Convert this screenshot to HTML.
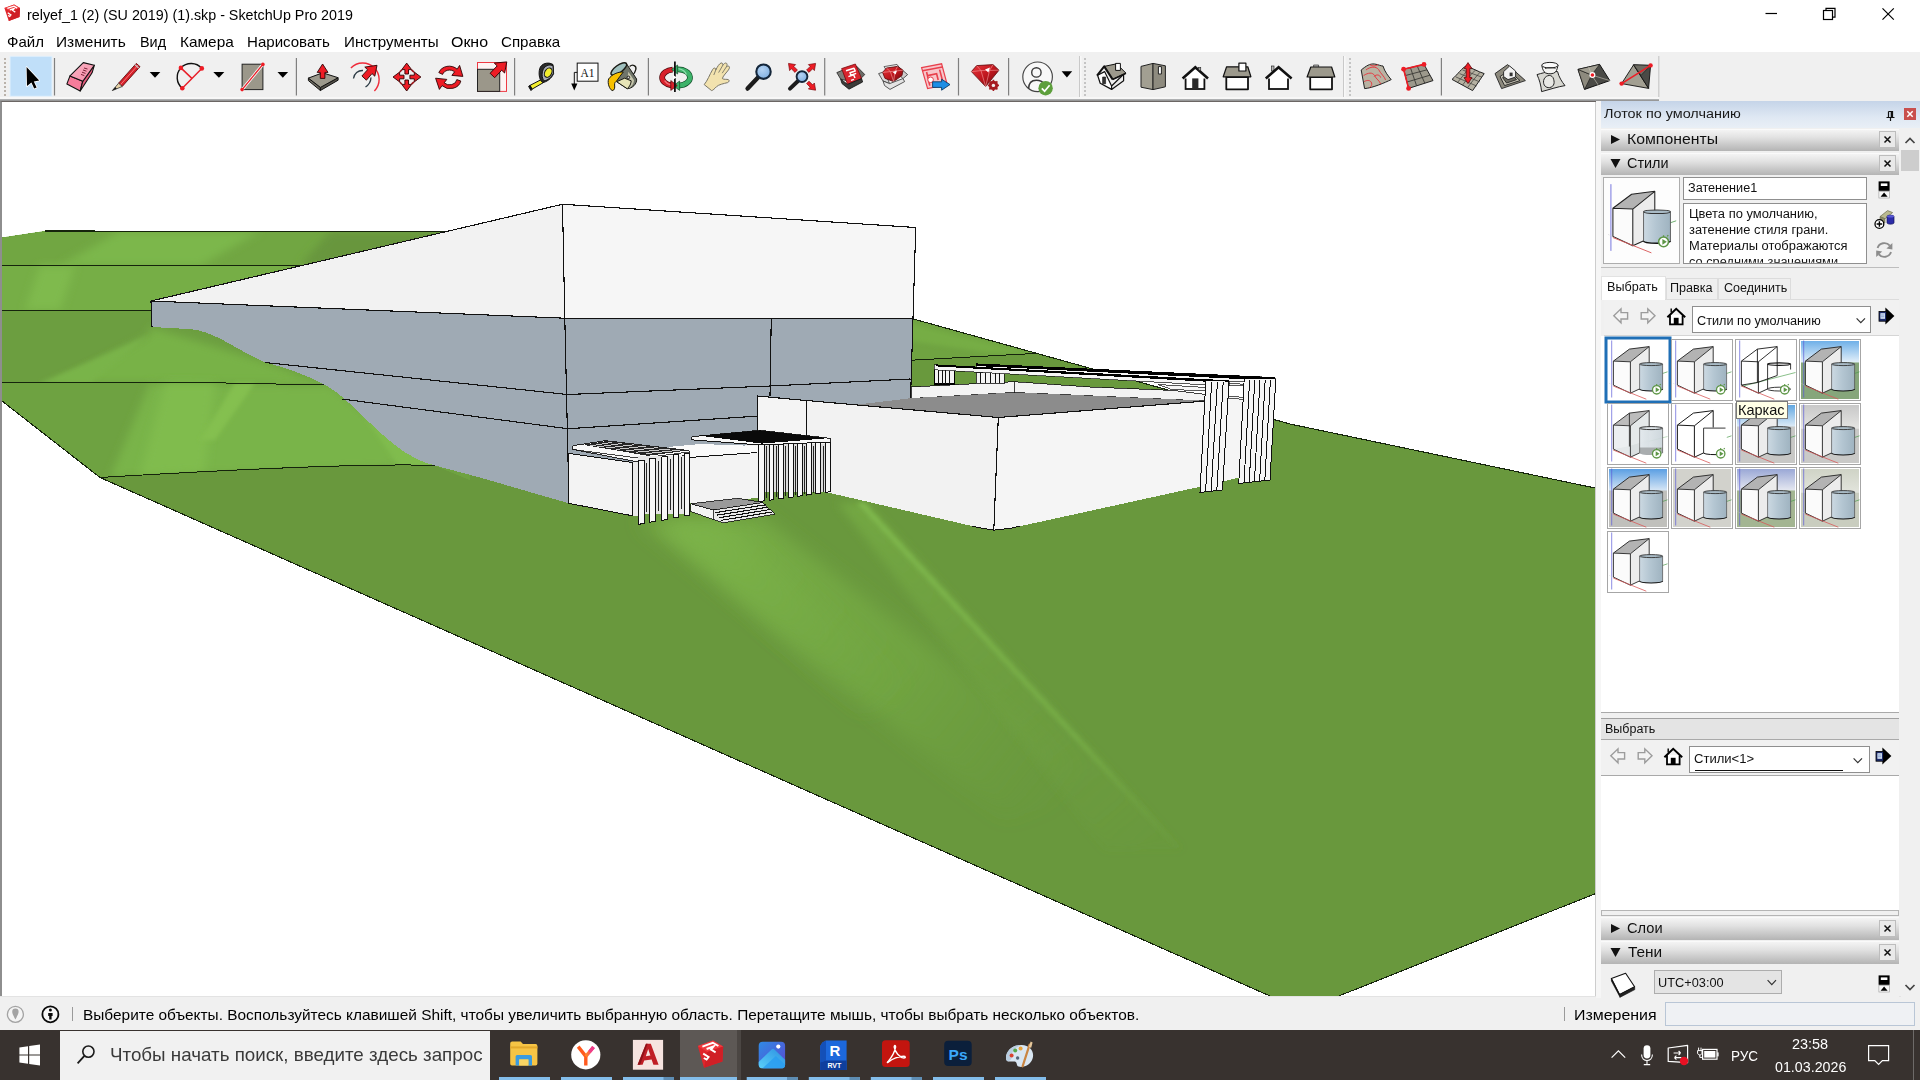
<!DOCTYPE html>
<html lang="ru">
<head>
<meta charset="utf-8">
<title>relyef_1 (2) (SU 2019) (1).skp - SketchUp Pro 2019</title>
<style>
html,body{margin:0;padding:0;}
body{width:1920px;height:1080px;overflow:hidden;position:relative;background:#fff;font-family:"Liberation Sans",sans-serif;}
.a{position:absolute;box-sizing:border-box;}
.t{position:absolute;white-space:nowrap;line-height:1;transform-origin:0 0;z-index:20;}
.bar{position:absolute;left:1601px;width:1298px;background:linear-gradient(#f4f4f4 0%,#e2e2e2 35%,#c9c9c9 70%,#b4b4b4 100%);border-top:1px solid #fafafa;box-sizing:border-box;}
.xb{position:absolute;left:1879px;width:17px;height:17px;background:#e9e9e9;border:1px solid #bdbdbd;box-sizing:border-box;}
svg{position:absolute;left:0;top:0;overflow:visible;}
</style>
</head>
<body>

<!-- title bar / menu -->
<div class="a" style="left:0;top:0;width:1920px;height:52px;background:#fff;"></div>
<!-- toolbar -->
<div class="a" style="left:0;top:52px;width:1920px;height:48px;background:#f0f0f0;"></div>
<div class="a" style="left:0;top:97px;width:1659px;height:2px;background:#f7f7f7;"></div>
<div class="a" style="left:0;top:99px;width:1659px;height:2px;background:linear-gradient(#b9bcbe,#8c8c8c);"></div>
<div class="a" style="left:1659px;top:97px;width:261px;height:4px;background:#f0f0f0;"></div>
<!-- region below toolbar right (panel gap) -->
<div class="a" style="left:1595px;top:101px;width:325px;height:897px;background:#f0f0f0;"></div>
<!-- viewport frame -->
<div class="a" style="left:0;top:101px;width:1596px;height:896px;background:#fff;border-left:2px solid #8e8e8e;border-top:1px solid #6b6664;"></div>
<div class="a" style="left:1595px;top:102px;width:1px;height:894px;background:#cdcdcd;"></div>
<div class="a" style="left:1596px;top:102px;width:5px;height:894px;background:#f6f6f6;z-index:1;"></div>
<!-- status bar -->
<div class="a" style="left:0;top:996px;width:1920px;height:34px;background:#f0f0f0;"></div>
<div class="a" style="left:0;top:996px;width:1920px;height:1px;background:#e3e3e3;"></div>
<div class="a" style="left:72px;top:1007px;width:1px;height:14px;background:#9a9a9a;"></div>
<div class="a" style="left:1564px;top:1007px;width:1px;height:14px;background:#9a9a9a;"></div>
<div class="a" style="left:1665px;top:1002px;width:250px;height:24px;background:#eff1f4;border:1px solid #b9c6d6;"></div>
<!-- taskbar -->
<div class="a" style="left:0;top:1030px;width:1920px;height:50px;background:#38322f;"></div>
<div class="a" style="left:60px;top:1031px;width:430px;height:49px;background:#f1f1f1;"></div>
<div class="a" style="left:680px;top:1030px;width:57px;height:50px;background:#5d5855;"></div>
<div class="a" style="left:737px;top:1030px;width:4px;height:50px;background:#4b4643;"></div>
<div class="a" style="left:1913px;top:1030px;width:1px;height:50px;background:#6d6a68;"></div>

<!-- 3D viewport scene -->
<svg width="1920" height="1080" viewBox="0 0 1920 1080" style="z-index:2">
<defs>
  <clipPath id="vp"><rect x="2" y="102" width="1593" height="894"/></clipPath>
  <filter id="b4" x="-20%" y="-20%" width="140%" height="140%"><feGaussianBlur stdDeviation="4"/></filter>
  <filter id="b8" x="-20%" y="-20%" width="140%" height="140%"><feGaussianBlur stdDeviation="9"/></filter>
  <filter id="b2" x="-20%" y="-20%" width="140%" height="140%"><feGaussianBlur stdDeviation="2"/></filter>
  <linearGradient id="gA" gradientUnits="userSpaceOnUse" x1="700" y1="520" x2="1060" y2="805"><stop offset="0" stop-color="#78ae46" stop-opacity="0.95"/><stop offset="0.55" stop-color="#74a943" stop-opacity="0.7"/><stop offset="1" stop-color="#6f9f40" stop-opacity="0"/></linearGradient>
  <linearGradient id="gA2" gradientUnits="userSpaceOnUse" x1="690" y1="520" x2="900" y2="705"><stop offset="0" stop-color="#7db54a" stop-opacity="0.8"/><stop offset="1" stop-color="#76ab45" stop-opacity="0"/></linearGradient>
  <linearGradient id="gB" gradientUnits="userSpaceOnUse" x1="850" y1="503" x2="1150" y2="849"><stop offset="0" stop-color="#74a943" stop-opacity="0.9"/><stop offset="1" stop-color="#6f9f40" stop-opacity="0.1"/></linearGradient>
  <linearGradient id="gC" gradientUnits="userSpaceOnUse" x1="860" y1="503" x2="1178" y2="848"><stop offset="0" stop-color="#80b94d" stop-opacity="1"/><stop offset="0.7" stop-color="#7ab248" stop-opacity="0.7"/><stop offset="1" stop-color="#74a943" stop-opacity="0.1"/></linearGradient>
  <clipPath id="terr"><path d="M2,237.5 L45,231 L470,231 L912.5,318.75 L1290,424 L1595,488 L1595,893.75 L1338.75,996 L1270,996 L100,477.5 L2,401 Z"/></clipPath>
  <clipPath id="hillL"><path d="M2,237.5 L45,231 L470,231 L470,480 L435,465.5 C380,463 250,467 100,477.5 L2,401 Z"/></clipPath>
</defs>
<g clip-path="url(#vp)" shape-rendering="crispEdges">
  <!-- terrain base -->
  <path d="M2,237.5 L45,231 L470,231 L912.5,318.75 L1290,424 L1595,488 L1595,893.75 L1338.75,996 L1270,996 L100,477.5 L2,401 Z" fill="#69983d"/>
  <!-- left hill lighter -->
  <g clip-path="url(#hillL)">
    <rect x="0" y="225" width="480" height="260" fill="#71a642"/>
    <!-- band 1 -->
    <polygon points="120,231 260,231 200,266 60,266" fill="#7cb74b" filter="url(#b4)"/>
    <polygon points="330,231 470,231 470,266 300,266" fill="#67963c" filter="url(#b4)"/>
    <!-- band 2 -->
    <rect x="0" y="265.5" width="330" height="45" fill="#76ae46"/>
    <polygon points="40,266 75,266 60,310 25,310" fill="#7fba4d" filter="url(#b4)"/>
    <!-- band 3 -->
    <rect x="0" y="310" width="340" height="73" fill="#6c9e40"/>
    <polygon points="150,327 265,362 330,385 120,383 60,383 150,335" fill="#78b247" filter="url(#b4)"/>
    <polygon points="150,335 40,383 90,383" fill="#79b449" filter="url(#b2)"/>
    <!-- band 4 -->
    <rect x="0" y="382.5" width="470" height="100" fill="#6ea241"/>
    <polygon points="150,383 330,385 375,420 435,465 330,470 110,478" fill="#79b448" filter="url(#b4)"/>
    <polygon points="165,383 215,383 205,472 140,476" fill="#80bc4e" filter="url(#b4)"/>
    <polygon points="235,383 255,383 215,440 200,440" fill="#84c050" filter="url(#b2)"/>
    <polygon points="360,410 440,468 400,468" fill="#80bc4d" filter="url(#b2)"/>
  </g>
  <!-- fold lines left hill -->
  <g stroke="#15240c" stroke-width="1" fill="none">
    <path d="M45,231 L447,231.5"/>
    <path d="M2,265.3 L300,265.5"/>
    <path d="M2,310 L151,310.3"/>
    <path d="M2,382.5 L200,382.5 L327,385"/>
    <path d="M100,477.5 C250,468.5 380,463.5 435,465.5"/>
  </g>
  <!-- hill behind on the right -->
  <g clip-path="url(#terr)">
    <polygon points="905,310 1040,353 905,361" fill="#6fa341"/>
    <polygon points="905,322 1030,353 990,353 905,340" fill="#76ad45" filter="url(#b2)"/>
    <polygon points="905,361 1040,353.3 1290,424 1290,440 905,440" fill="#69993d"/>
    <!-- light streaks lower terrain -->
    <polygon points="640,520 762,518 1115,792 1005,818" fill="url(#gA)" filter="url(#b8)"/>
    <polygon points="662,522 722,520 930,700 860,715" fill="url(#gA2)" filter="url(#b8)"/>
    <polygon points="838,503 866,503 1182,849 1105,849" fill="url(#gB)" filter="url(#b4)"/>
    <polygon points="857,503 864.5,503 1181,848 1175,848" fill="url(#gC)" filter="url(#b2)"/>
  </g>
  <path d="M912,360.2 L1037.5,353.3" stroke="#15240c" stroke-width="1" fill="none"/>
  <!-- terrain outline -->
  <path d="M447,231.5 L45,231 M2,401 L100,477.5 L1270,996 M1338.75,996 L1595,893.75 M912.5,318.75 L1290,424 L1595,488" fill="none" stroke="#15240c" stroke-width="1.1"/>

  <!-- BIG BUILDING -->
  <!-- gray left face -->
  <path d="M151,301 L564.8,318.2 L569,503.3 L540,495 L480,477.5 L434.4,465.4 C428,463.6 422,461.6 417.3,459.3 C408,454.6 400,449.4 392.7,443.4 C384,436.2 376,428.8 368.2,421.3 C360,413.4 352,405.4 343.6,398 C338,393.2 332.4,389 326.4,385.7 C306,374.4 286,368 265.1,362.4 C240,352 215,331.4 191.4,329.2 L152,327 Z" fill="#9faab4"/>
  <!-- gray front face -->
  <polygon points="564.5,317.5 912.5,318 910.5,415 830,470 568.7,503.3" fill="#9faab4"/>
  <!-- white upper faces -->
  <polygon points="151,301 562.5,204.25 564.8,318.6" fill="#f2f2f2"/>
  <polygon points="562.5,204.25 915.75,227.5 912.5,318.8 564.8,318.6" fill="#f6f6f6"/>
  <g stroke="#111" stroke-width="1.1" fill="none" stroke-linejoin="round">
    <path d="M151,301 L562.5,204.25 L915.75,227.5 L910.5,400"/>
    <path d="M562.5,204.25 L564.8,318.2 L569,503.3"/>
    <path d="M151,301 L564.8,318.2 L912.5,318.4"/>
    <path d="M151,301 L152,327"/>
    <path d="M265,362.5 L567.5,394.5 L770,386 L910.5,379"/>
    <path d="M342,399 L568,428.75 L758.75,416"/>
    <path d="M771.25,318.2 L770,396"/>
  </g>

  <!-- FAR PERGOLA (behind lower building) -->
  <g>
    <!-- back parapet walls -->
    <polygon points="911,387 1014,381.7 1014,392.5 911,398.5" fill="#f4f4f4" stroke="#111" stroke-width="0.8"/>
    <polygon points="1014,381.7 1090,387 1173,390.4 1205.6,394.4 1205.6,401 1014,392.5" fill="#f3f3f3" stroke="#111" stroke-width="0.8"/>
    <!-- far left post clusters -->
    <rect x="934.4" y="366" width="20" height="18" fill="#f4f4f4" stroke="#000" stroke-width="1.3"/>
    <path d="M938,369 V384 M942,369 V384 M945.5,369 V384 M949.5,369 V384" stroke="#111" stroke-width="1"/>
    <rect x="976" y="372" width="28" height="11.5" fill="#f4f4f4" stroke="#111" stroke-width="0.8"/>
    <path d="M980,373 V383 M985,373 V383 M990,373 V383 M995,373 V383 M999.5,373 V383" stroke="#111" stroke-width="1"/>
    <!-- back beam -->
    <polygon points="976,364 1275.4,377.6 1275.4,382.4 1229,381.8 976,368.2" fill="#f6f6f6" stroke="#111" stroke-width="0.7"/>
    <polygon points="976,363.4 1275.4,377.2 1275.4,380.8 976,366" fill="#000"/>
    <!-- front beam -->
    <polygon points="934.4,364.8 1229,381.4 1229,386.2 934.4,369.8" fill="#f6f6f6" stroke="#111" stroke-width="0.7"/>
    <polygon points="936,364.4 1229,380.4 1229,383 936,366.4" fill="#000"/>
    <!-- inner beam -->
    <polygon points="1157.7,384.5 1207,387.6 1207,390.8 1172,389.6" fill="#f6f6f6" stroke="#111" stroke-width="0.7"/>
  </g>

  <!-- LOWER BUILDING -->
  <polygon points="757.5,396 806.7,400.6 806.7,470 757.5,470" fill="#f4f4f4"/>
  <path d="M757.5,437 L757.5,396 L806.7,400.6" stroke="#111" stroke-width="1.1" fill="none"/>
  <polygon points="858,404.5 911,398.2 1014,392.5 1206,400.8 998.3,417.5" fill="#8c8c8c"/>
  <polygon points="806.7,400.5 998.3,417.5 993.8,530.2 978.4,527.5 830,493 806.7,488" fill="#f2f2f2"/>
  <polygon points="998.3,417.5 1206,401 1244,398.4 1239.4,477.6 1200.3,486.7 1012,528 993.8,530.2" fill="#f5f5f5"/>
  <g stroke="#111" stroke-width="1.1" fill="none" stroke-linejoin="round">
    <path d="M806.7,400.5 L998.3,417.5 L1206,401"/>
    <path d="M998.3,417.5 L993.8,530.2"/>
    <path d="M806.7,400.5 L806.7,438"/>
    <path d="M972,526 L978.4,527.5 L993.8,530.2 L1012,528 L1020,526.2" stroke-width="1"/>
  </g>
  <!-- right post groups -->
  <polygon points="1229,383.6 1245.7,384.2 1245.7,386 1229,385.4" fill="#f6f6f6" stroke="#111" stroke-width="0.7"/>
  <polygon points="1228,396 1245,397.6 1245,399.6 1228,398" fill="#f6f6f6" stroke="#111" stroke-width="0.7"/>
  <polygon points="1205.8,381 1229,381.6 1222.5,490 1200,492.5" fill="#f6f6f6"/>
  <g stroke="#111" stroke-width="1" fill="none">
    <path d="M1205.8,381 L1200,492.5 L1222.5,490 L1229,382"/>
    <path d="M1211.6,382 L1205.6,492 M1217.4,382 L1211.2,491.4 M1223.2,382 L1216.8,490.8"/>
  </g>
  <polygon points="1244.2,378.6 1275.8,378.6 1270,480 1238.75,483.5" fill="#f6f6f6"/>
  <g stroke="#111" stroke-width="1" fill="none">
    <path d="M1244.2,379 L1238.75,483.5 L1270,480 L1275.8,379"/>
    <path d="M1249.6,380 L1244,483 M1254.8,380 L1249.2,482.4 M1260,380 L1254.4,481.8 M1265.2,380 L1259.6,481.2 M1270.4,380 L1264.8,480.6"/>
  </g>

  <!-- LEFT ENTRY BOX + PERGOLA 1 -->
  <polygon points="689,450 757.5,444.5 757.5,498 690,503.5" fill="#f3f3f3"/>
  <polygon points="668,447 700,444 757.5,446 757.5,452.5 689,457.5" fill="#fafafa"/>
  <path d="M689,457.5 L757.5,452.5" stroke="#111" stroke-width="1"/>
  <polygon points="568.3,453.3 632.5,462.5 632.5,515.8 568.7,503.3" fill="#f3f3f3" stroke="#111" stroke-width="1"/>
  <polygon points="632.5,462.5 638.3,462 638.3,516.5 632.5,515.8" fill="#ececec"/>
  <!-- pergola 1 slab -->
  <polygon points="572.5,445.6 605,440.6 689,450.6 689,455 640,462.5 572.5,449.6" fill="#f8f8f8" stroke="#111" stroke-width="0.9"/>
  <polygon points="583,444.8 607,441 687,450.6 648,455.8" fill="#262626"/>
  <path d="M590,446 L612,442.4 M597,447 L622,443.4 M606,448 L634,444.8 M616,449.4 L646,446.2 M626,450.8 L658,447.6 M636,452.2 L670,449 M646,453.6 L680,450.2" stroke="#f4f4f4" stroke-width="0.8"/>
  <path d="M572.5,449.6 L640,458.4 L689,452" stroke="#111" stroke-width="0.8" fill="none"/>
  <!-- pergola 1 posts -->
  <rect x="638" y="456" width="51" height="58" fill="#e6e6e6"/>
  <g fill="#f7f7f7" stroke="#111" stroke-width="1">
    <polygon points="684.2,453 689.2,453 689.2,515.3 684.2,515.8"/>
    <polygon points="673.3,455 678.6,454.6 678.6,517.5 673.3,518"/>
    <polygon points="661.7,457 667.5,456.4 667.5,519.7 661.7,520.2"/>
    <polygon points="649.2,459 655,458.4 655,521.7 649.2,522.2"/>
    <polygon points="638.3,461 644.2,460.4 644.2,523.7 638.3,524.2"/>
  </g>
  <path d="M646.5,463 V512 M658,461 V511 M670,459 V510 M681,457 V509" stroke="#111" stroke-width="0.9"/>

  <!-- PERGOLA 2 -->
  <rect x="758" y="444" width="72" height="48" fill="#dcdcdc"/>
  <g fill="#f7f7f7" stroke="#111" stroke-width="1">
    <polygon points="825,442 830,442 830,491.7 825,492.4"/>
    <polygon points="815.8,442 820.8,442 820.8,493 815.8,493.6"/>
    <polygon points="806.7,442 811.7,442 811.7,494.3 806.7,495"/>
    <polygon points="797.5,442 802.5,442 802.5,495.6 797.5,496.3"/>
    <polygon points="788.3,442 793.3,442 793.3,497 788.3,497.7"/>
    <polygon points="778.3,442 783.3,442 783.3,498.3 778.3,499"/>
    <polygon points="769.2,442 773.8,442 773.8,499.6 769.2,500.2"/>
    <polygon points="758.3,442 764.2,442 764.2,500.9 758.3,501.6"/>
  </g>
  <path d="M766.5,446 V498 M776,446 V497 M785.8,446 V496 M795.4,446 V495 M804.6,446 V494 M813.7,446 V493 M823,446 V492" stroke="#111" stroke-width="0.9"/>
  <polygon points="691.7,436.7 760,430.3 830,438.3 830,442 760,445 691.7,439.8" fill="#f8f8f8" stroke="#111" stroke-width="0.9"/>
  <polygon points="699,435.6 760,430.4 828,438.2 762,443.6" fill="#0a0a0a"/>
  <path d="M691.7,439.8 L760,445 L830,442" stroke="#111" stroke-width="0.8" fill="none"/>

  <!-- STAIRS -->
  <polygon points="690.8,503.7 713.3,510 713.3,519.5 690.8,511.5" fill="#f3f3f3" stroke="#111" stroke-width="0.8"/>
  <polygon points="690.8,503.7 738.3,498.3 763.3,502.5 713.3,510" fill="#9a9a9a" stroke="#111" stroke-width="0.8"/>
  <polygon points="713.3,510 763.3,502.5 775,514.2 723.3,522.8 713.3,519.5" fill="#e9e9e9" stroke="#111" stroke-width="0.8"/>
  <path d="M715.3,512.6 L765.6,504.8 M717.3,515.1 L768,507.2 M719.3,517.7 L770.3,509.5 M721.3,520.3 L772.6,511.9" stroke="#111" stroke-width="1.1"/>
</g>
</svg>

<!-- DEFAULT TRAY PANEL -->
<div class="a" style="left:1601px;top:101px;width:319px;height:27px;background:linear-gradient(#c5d4e8,#dfe8f3 60%,#e9eff6);"></div>
<div class="a" style="left:1596px;top:101px;width:5px;height:897px;background:#f5f5f5;"></div>
<!-- pin + red close -->
<svg width="1920" height="1080" style="z-index:5">
  <g stroke="#111" stroke-width="1.2" fill="none"><path d="M1888.5,111.5 V117 M1888.5,111.5 H1892.5 V117 M1886.5,117.5 H1894.5 M1890.5,117.5 V121"/><path d="M1891.5,111.5 V117" stroke-width="1.6"/></g>
  <rect x="1904" y="108" width="12" height="12" fill="#c9504d"/>
  <path d="M1907.3,111.3 L1912.7,116.7 M1912.7,111.3 L1907.3,116.7" stroke="#fff" stroke-width="1.5"/>
</svg>
<!-- section bars -->
<div class="bar" style="top:128.5px;height:22.5px;width:298px;"></div>
<div class="bar" style="top:152.5px;height:22px;width:298px;"></div>
<div class="bar" style="top:917px;height:22.5px;width:298px;"></div>
<div class="bar" style="top:941px;height:22.5px;width:298px;"></div>
<div class="xb" style="top:131px;"></div><div class="xb" style="top:155px;"></div>
<div class="xb" style="top:920px;"></div><div class="xb" style="top:944px;"></div>
<svg width="1920" height="1080" style="z-index:6">
  <g stroke="#111" stroke-width="1.5">
    <path d="M1884.5,136.5 l6,6 m0,-6 l-6,6"/><path d="M1884.5,160.5 l6,6 m0,-6 l-6,6"/>
    <path d="M1884.5,925.5 l6,6 m0,-6 l-6,6"/><path d="M1884.5,949.5 l6,6 m0,-6 l-6,6"/>
  </g>
  <g fill="#111">
    <polygon points="1611,135 1620,139.5 1611,144"/>
    <polygon points="1610.5,159 1620.5,159 1615.5,168"/>
    <polygon points="1611,924 1620,928.5 1611,933"/>
    <polygon points="1610.5,948 1620.5,948 1615.5,957"/>
  </g>
  <!-- scrollbar -->
  <rect x="1901" y="128" width="19" height="870" fill="#f0f0f0"/>
  <rect x="1901" y="150" width="18" height="21" fill="#cdcdcd"/>
  <path d="M1905.5,143 L1910,138.5 L1914.5,143" stroke="#444" stroke-width="1.7" fill="none"/>
  <path d="M1905.5,985 L1910,989.5 L1914.5,985" stroke="#444" stroke-width="1.7" fill="none"/>
</svg>
<!-- styles section body -->
<div class="a" style="left:1601px;top:174.5px;width:298px;height:93px;background:#f0f0f0;"></div>
<div class="a" style="left:1603.4px;top:177.3px;width:76.6px;height:86.5px;background:#fdfdfd;border:1px solid #adadad;"></div>
<div class="a" style="left:1683.3px;top:177.3px;width:183.5px;height:23px;background:#fff;border:1px solid #8f8f8f;"></div>
<div class="a" style="left:1683.3px;top:203.4px;width:183.5px;height:60.4px;background:#fff;border:1px solid #8f8f8f;overflow:hidden;"></div>
<div class="a" style="left:1601px;top:267px;width:298px;height:1px;background:#bdbdbd;"></div>
<!-- tabs -->
<div class="a" style="left:1601px;top:268px;width:298px;height:31px;background:#f0f0f0;"></div>
<div class="a" style="left:1665.6px;top:278px;width:52px;height:20.5px;background:#efefef;border:1px solid #dcdcdc;border-bottom:none;"></div>
<div class="a" style="left:1718px;top:278px;width:73px;height:20.5px;background:#efefef;border:1px solid #dcdcdc;border-bottom:none;"></div>
<div class="a" style="left:1601px;top:276px;width:64.5px;height:23.5px;background:#fff;border:1px solid #e2e2e2;border-bottom:none;"></div>
<div class="a" style="left:1665px;top:298.5px;width:234px;height:1px;background:#dcdcdc;"></div>
<!-- nav row -->
<div class="a" style="left:1603.8px;top:300px;width:295px;height:35.5px;background:#f1f1f1;border-bottom:1px solid #d5d5d5;"></div>
<div class="a" style="left:1692.3px;top:306.3px;width:178.3px;height:27px;background:#fff;border:1px solid #8f8f8f;"></div>
<!-- thumbs area -->
<div class="a" style="left:1601px;top:336px;width:298px;height:375.5px;background:#fff;"></div>
<!-- splitter -->
<div class="a" style="left:1601px;top:711.5px;width:298px;height:7px;background:#f0f0f0;border-top:1.5px solid #a9a9a9;border-bottom:1px solid #a0a0a0;"></div>
<div class="a" style="left:1601px;top:718.5px;width:298px;height:21px;background:#e4e4e4;border-bottom:1px solid #a9a9a9;"></div>
<div class="a" style="left:1601px;top:740px;width:298px;height:35.5px;background:#f1f1f1;border-bottom:1px solid #a9a9a9;"></div>
<div class="a" style="left:1689.3px;top:746.4px;width:180.5px;height:27px;background:#fff;border:1px solid #8f8f8f;"></div>
<div class="a" style="left:1695.2px;top:769.6px;width:147.5px;height:1.2px;background:#111;"></div>
<div class="a" style="left:1601px;top:775.5px;width:298px;height:134.5px;background:#fff;"></div>
<div class="a" style="left:1601px;top:910px;width:298px;height:6px;background:#f0f0f0;border:1px solid #b5b5b5;"></div>
<!-- shadows row -->
<div class="a" style="left:1601px;top:963.5px;width:298px;height:34.5px;background:#f0f0f0;"></div>
<div class="a" style="left:1654px;top:970.3px;width:127.8px;height:23.4px;background:#e4e4e4;border:1px solid #adadad;"></div>
<!-- tooltip -->
<div class="a" style="left:1736px;top:401.3px;width:52px;height:18.2px;background:#ffffe6;border:1px solid #7a7a7a;z-index:25;"></div>

<!-- panel + titlebar icons -->
<svg width="1920" height="1080" style="z-index:9">
<defs>
  <g id="navset">
    <path d="M1613.8,315.8 L1621,308.8 L1621,312.6 L1627.6,312.6 L1627.6,319 L1621,319 L1621,322.8 Z" fill="#f4f4f4" stroke="#9c9c9c" stroke-width="1.4" stroke-linejoin="miter"/>
    <path d="M1655,315.8 L1647.8,308.8 L1647.8,312.6 L1641.2,312.6 L1641.2,319 L1647.8,319 L1647.8,322.8 Z" fill="#f4f4f4" stroke="#9c9c9c" stroke-width="1.4" stroke-linejoin="miter"/>
    <path d="M1667.4,317.2 L1676.2,308.8 L1685.2,317.2" fill="none" stroke="#000" stroke-width="2"/>
    <path d="M1670,315 V324.4 H1682.6 V315" fill="#fff" stroke="#000" stroke-width="1.8"/>
    <rect x="1673.8" y="317.8" width="4.8" height="6.6" fill="#000"/>
    <path d="M1671.2,312.6 V308.6" stroke="#000" stroke-width="1.4"/>
    <path d="M1856.6,318.4 L1860.8,322.6 L1865,318.4" fill="none" stroke="#333" stroke-width="1.2"/>
    <path d="M1885.4,307.6 L1894.4,316 L1885.4,324.4 Z" fill="#000"/>
    <rect x="1879" y="311.4" width="7.4" height="9.8" fill="#1b2b6b" stroke="#000" stroke-width="0.8"/>
    <rect x="1880.4" y="313.2" width="4.6" height="5.6" fill="#dbe6f5"/>
    <path d="M1881,315 H1884.4 M1881,316.8 H1884.4" stroke="#5b7fc0" stroke-width="0.7"/>
  </g>
</defs>
<use href="#navset"/>
<use href="#navset" transform="translate(-3,440)"/>
<!-- secondary pane toggle -->
<g id="sec">
  <rect x="1878.6" y="181.4" width="11" height="9.4" fill="#000"/>
  <rect x="1880.8" y="183.4" width="6.6" height="2.6" fill="#fff"/>
  <rect x="1878.9" y="191.6" width="10.4" height="6.4" fill="#f8f8f8" stroke="#9a9a9a" stroke-width="0.6"/>
  <polygon points="1880.6,196.8 1887.6,196.8 1884.1,192.6" fill="#000"/>
</g>
<use href="#sec" transform="translate(0,794)"/>
<!-- create new style -->
<polygon points="1880,216.6 1887.6,210.6 1892.6,212.6 1885,218.8" fill="#b9b98f" stroke="#6b6b52" stroke-width="0.7"/>
<polygon points="1880,216.6 1885,218.8 1885,223 1880,220.6" fill="#8d8d6a" stroke="#6b6b52" stroke-width="0.6"/>
<path d="M1887,216.4 C1887,214.8 1894,214.8 1894,216.4 V222.8 C1894,224.6 1887,224.6 1887,222.8 Z" fill="#2c2ca8" stroke="#15155a" stroke-width="0.7"/>
<ellipse cx="1890.5" cy="216.4" rx="3.5" ry="1.1" fill="#5a5ad6"/>
<circle cx="1879.4" cy="224" r="4.4" fill="#fff" stroke="#000" stroke-width="1.3"/>
<path d="M1876.6,224 H1882.2 M1879.4,221.2 V226.8" stroke="#000" stroke-width="1.4"/>
<!-- refresh -->
<g fill="none" stroke="#8c8c8c" stroke-width="1.9">
  <path d="M1877.6,248 A7,6.6 0 0 1 1889.8,245.6"/>
  <path d="M1891,252 A7,6.6 0 0 1 1878.8,254.4"/>
</g>
<polygon points="1892.4,243 1892.4,249.4 1886.4,248.4" fill="#8c8c8c"/>
<polygon points="1876.2,257 1876.2,250.6 1882.2,251.6" fill="#8c8c8c"/>
<!-- shadows cube -->
<g stroke="#111" stroke-linejoin="round">
  <polygon points="1611.4,978.6 1625.6,973.2 1634.6,986.8 1619.6,994.6" fill="#fff" stroke-width="1.1"/>
  <polygon points="1611.4,978.6 1619.6,994.6 1619.6,996.4 1611.4,981" fill="#111" stroke-width="0.6"/>
  <polygon points="1619.6,994.6 1634.6,986.8 1634.8,989.6 1619.8,997.4" fill="#222" stroke-width="0.6"/>
</g>
<path d="M1767.6,980.2 L1771.8,984.6 L1776,980.2" fill="none" stroke="#333" stroke-width="1.2"/>
<!-- titlebar logo -->
<g transform="translate(12.2,12.8) scale(0.84) translate(-12.3,-13.6)">
  <polygon points="3,8 14.6,3.8 21.6,8 21,18.6 8.2,23.4" fill="#df262c"/>
  <polygon points="3,8 14.6,3.8 21.6,8 10.6,12" fill="#ef4044"/>
  <polygon points="10.6,12 21.6,8 21,18.6 8.2,23.4" fill="#cf1f26"/>
  <path d="M6.6,8.4 L14.4,5.6 L18.2,8 M9.6,10.2 L14.6,8.4 L12.8,10.8 L16,12.8 M7,13.6 L10.8,16.2 L9.4,18 L7.4,16.8" fill="none" stroke="#fff" stroke-width="1.5"/>
</g>
<!-- window controls -->
<path d="M1765.5,13.5 H1777" stroke="#000" stroke-width="1.2"/>
<rect x="1823.5" y="10.5" width="9" height="9" fill="#fff" stroke="#000" stroke-width="1.2"/>
<path d="M1826,10.5 V8.3 H1835 V17.2 H1832.5" fill="none" stroke="#000" stroke-width="1.2"/>
<path d="M1882.5,8.3 L1893.8,19.6 M1893.8,8.3 L1882.5,19.6" stroke="#000" stroke-width="1.2"/>
</svg>

<!-- style thumbnails -->
<svg width="1920" height="1080" style="z-index:8">
<defs>
<linearGradient id="cyl" x1="0" x2="1" y1="0" y2="0"><stop offset="0" stop-color="#ccd9e2"/><stop offset="0.45" stop-color="#b4c6d2"/><stop offset="1" stop-color="#9fb3c0"/></linearGradient>
<linearGradient id="cylx" x1="0" x2="1" y1="0" y2="0"><stop offset="0" stop-color="#e3e9ed"/><stop offset="1" stop-color="#c9d3d9"/></linearGradient>
<g id="obj"><path d="M4.2,1 V58" stroke="#5a5ad8" stroke-width="0.7"/><path d="M2,44 L5.9,46.2" stroke="#c8c8c8" stroke-width="0.6" stroke-dasharray="1 1"/><path d="M55,34 L60,32.3" stroke="#4f9c4f" stroke-width="0.7"/><polygon points="5.9,21.6 21.9,9.6 41.7,7.1 22.9,22.3" fill="#b3b3b3"/><polygon points="5.9,21.6 22.9,22.3 22.9,53.7 5.9,45.6" fill="#fbfbfb"/><polygon points="22.9,22.3 41.7,7.1 41.7,44 32.5,49.2 22.9,53.7" fill="#ececec"/><path d="M5.9,21.6 L21.9,9.6 L41.7,7.1 L22.9,22.3 Z M5.9,21.6 V45.6 L22.9,53.7 V22.3 M41.7,7.1 V24 M22.9,53.7 L32.3,49.3" fill="none" stroke="#222" stroke-width="0.9" stroke-linejoin="round"/><path d="M32.1,24.6 V49.6 A11.5,1.9 0 0 0 55.1,49.6 V24.6 Z" fill="url(#cyl)"/><ellipse cx="43.6" cy="24.6" rx="11.5" ry="1.5" fill="#a9bbc6" stroke="#333" stroke-width="0.9"/><path d="M32.1,24.6 V49.6 M55.1,24.6 V49.6" stroke="#4a4a4a" stroke-width="0.7" fill="none"/><path d="M32.1,49.6 A11.5,1.9 0 0 0 55.1,49.6" stroke="#111" stroke-width="1.2" fill="none"/><path d="M5.9,46.6 L38.8,59.7" stroke="#d85a5a" stroke-width="0.8"/></g>
<g id="objw"><path d="M4.2,1 V58" stroke="#5a5ad8" stroke-width="0.7"/><path d="M6,47 L60,33" stroke="#58a558" stroke-width="0.7"/><path d="M5.9,21.6 L21.9,9.6 L41.7,7.1 L22.9,22.3 Z M5.9,21.6 V45.6 L22.9,53.7 V22.3 M41.7,7.1 V36 M21.9,9.6 V43 M5.9,45.6 L21.9,43 L41.7,36 M22.9,53.7 L32.3,49.3" fill="none" stroke="#1a1a1a" stroke-width="0.9" stroke-linejoin="round"/><ellipse cx="43.6" cy="24.6" rx="11.5" ry="1.3" fill="none" stroke="#111" stroke-width="1.2"/><path d="M32.1,24.6 V49.6 M55.1,24.6 V30" stroke="#222" stroke-width="0.9" fill="none"/><ellipse cx="43.6" cy="49.6" rx="11.5" ry="1.9" fill="none" stroke="#222" stroke-width="0.9"/><path d="M5.9,46.6 L38.8,59.7" stroke="#d85a5a" stroke-width="0.8"/></g>
<g id="objh"><path d="M4.2,1 V58" stroke="#5a5ad8" stroke-width="0.7"/><path d="M55,34 L60,32.3" stroke="#4f9c4f" stroke-width="0.7"/><path d="M5.9,21.6 L21.9,9.6 L41.7,7.1 L22.9,22.3 Z M5.9,21.6 V45.6 L22.9,53.7 V22.3 M41.7,7.1 V24 M22.9,53.7 L32.3,49.3" fill="#fff" stroke="#1a1a1a" stroke-width="1" stroke-linejoin="round"/><path d="M32.1,24.6 V49.6 A11.5,1.9 0 0 0 55.1,49.6 V24.6 Z" fill="#fff"/><path d="M32.1,24.6 V49.6 M32.1,24.6 H54" stroke="#222" stroke-width="0.9" fill="none"/><path d="M32.1,49.6 A11.5,1.9 0 0 0 50,50.8" stroke="#111" stroke-width="1" fill="none"/><path d="M5.9,46.6 L38.8,59.7" stroke="#d85a5a" stroke-width="0.8"/></g>
<g id="objx"><path d="M4.2,1 V58" stroke="#5a5ad8" stroke-width="0.7"/><path d="M6,47 L60,33" stroke="#9cc79c" stroke-width="0.6"/><polygon points="5.9,45.6 21.9,43 41.7,36 32.5,49.2 22.9,53.7" fill="#c9cccd"/><polygon points="5.9,21.6 21.9,9.6 41.7,7.1 22.9,22.3" fill="#bcbcbc"/><polygon points="5.9,21.6 22.9,22.3 22.9,53.7 5.9,45.6" fill="#e9ecee" fill-opacity="0.85"/><polygon points="22.9,22.3 41.7,7.1 41.7,44 32.5,49.2 22.9,53.7" fill="#dfe3e5" fill-opacity="0.8"/><path d="M5.9,21.6 L21.9,9.6 L41.7,7.1 L22.9,22.3 Z M5.9,21.6 V45.6 L22.9,53.7 V22.3 M41.7,7.1 V24 M21.9,9.6 V43 M22.9,53.7 L32.3,49.3" fill="none" stroke="#2a2a2a" stroke-width="0.9" stroke-linejoin="round"/><path d="M32.1,24.6 V49.6 A11.5,1.9 0 0 0 55.1,49.6 V24.6 Z" fill="url(#cylx)" fill-opacity="0.9"/><path d="M32.1,44 H55.1 V49.6 A11.5,1.9 0 0 1 32.1,49.6 Z" fill="#a9adaf"/><ellipse cx="43.6" cy="24.6" rx="11.5" ry="1.5" fill="#dfe5e9" stroke="#222" stroke-width="0.9"/><path d="M32.1,24.6 V49.6 M55.1,24.6 V49.6" stroke="#555" stroke-width="0.7" fill="none"/><path d="M5.9,46.6 L38.8,59.7" stroke="#d85a5a" stroke-width="0.8"/></g>
<g id="clk"><circle cx="49.2" cy="50.3" r="4.2" fill="#fff" stroke="#5d9646" stroke-width="1.3"/><path d="M48.2,47.8 V52.8 L52,50.3 Z" fill="#5d9646"/><path d="M49.2,44.6 V46.2 M52.3,45.6 L53.2,44.6" stroke="#5d9646" stroke-width="1.1"/></g>
</defs>
<g transform="translate(1607.5,339.5)">
<rect x="0" y="0" width="61" height="61" fill="#fff"/>
<use href="#obj"/>
<use href="#clk"/>
<rect x="-1.5" y="-1.5" width="64" height="64" fill="none" stroke="#1f6fb6" stroke-width="3"/>
</g>
<g transform="translate(1671.5,339.5)">
<rect x="0" y="0" width="61" height="61" fill="#fff"/>
<use href="#obj"/>
<use href="#clk"/>
<rect x="0" y="0" width="61" height="61" fill="none" stroke="#a6a6a6" stroke-width="1"/>
</g>
<g transform="translate(1735.5,339.5)">
<rect x="0" y="0" width="61" height="61" fill="#fff"/>
<use href="#objw"/>
<use href="#clk"/>
<rect x="0" y="0" width="61" height="61" fill="none" stroke="#a6a6a6" stroke-width="1"/>
</g>
<g transform="translate(1799.5,339.5)">
<linearGradient id="tb3" x1="0" x2="0" y1="0" y2="1"><stop offset="0" stop-color="#6fb0e8"/><stop offset="0.36" stop-color="#e1eef9"/><stop offset="0.38" stop-color="#86a67b"/><stop offset="1" stop-color="#86a67b"/></linearGradient>
<rect x="0" y="0" width="61" height="61" fill="#fff"/><rect x="1.5" y="1.5" width="58" height="58" fill="url(#tb3)"/>
<use href="#obj"/>
<rect x="0" y="0" width="61" height="61" fill="none" stroke="#a6a6a6" stroke-width="1"/>
</g>
<g transform="translate(1607.5,403.5)">
<rect x="0" y="0" width="61" height="61" fill="#fff"/>
<use href="#objx"/>
<use href="#clk"/>
<rect x="0" y="0" width="61" height="61" fill="none" stroke="#a6a6a6" stroke-width="1"/>
</g>
<g transform="translate(1671.5,403.5)">
<rect x="0" y="0" width="61" height="61" fill="#fff"/>
<use href="#objh"/>
<use href="#clk"/>
<rect x="0" y="0" width="61" height="61" fill="none" stroke="#a6a6a6" stroke-width="1"/>
</g>
<g transform="translate(1735.5,403.5)">
<linearGradient id="tb6" x1="0" x2="0" y1="0" y2="1"><stop offset="0" stop-color="#62a8e2"/><stop offset="0.36" stop-color="#d9e9f6"/><stop offset="0.38" stop-color="#c8c8c6"/><stop offset="1" stop-color="#c8c8c6"/></linearGradient>
<rect x="0" y="0" width="61" height="61" fill="#fff"/><rect x="1.5" y="1.5" width="58" height="58" fill="url(#tb6)"/>
<use href="#obj"/>
<rect x="0" y="0" width="61" height="61" fill="none" stroke="#a6a6a6" stroke-width="1"/>
</g>
<g transform="translate(1799.5,403.5)">
<linearGradient id="tb7" x1="0" x2="0" y1="0" y2="1"><stop offset="0" stop-color="#c8c8c8"/><stop offset="0.4" stop-color="#e4e4e2"/><stop offset="0.42" stop-color="#c9c9c7"/><stop offset="1" stop-color="#c9c9c7"/></linearGradient>
<rect x="0" y="0" width="61" height="61" fill="#fff"/><rect x="1.5" y="1.5" width="58" height="58" fill="url(#tb7)"/>
<use href="#obj"/>
<rect x="0" y="0" width="61" height="61" fill="none" stroke="#a6a6a6" stroke-width="1"/>
</g>
<g transform="translate(1607.5,467.5)">
<linearGradient id="tb8" x1="0" x2="0" y1="0" y2="1"><stop offset="0" stop-color="#5b9fe3"/><stop offset="0.36" stop-color="#d3e4f5"/><stop offset="0.38" stop-color="#c0c0bc"/><stop offset="1" stop-color="#c0c0bc"/></linearGradient>
<rect x="0" y="0" width="61" height="61" fill="#fff"/><rect x="1.5" y="1.5" width="58" height="58" fill="url(#tb8)"/>
<use href="#obj"/>
<rect x="0" y="0" width="61" height="61" fill="none" stroke="#a6a6a6" stroke-width="1"/>
</g>
<g transform="translate(1671.5,467.5)">
<linearGradient id="tb9" x1="0" x2="0" y1="0" y2="1"><stop offset="0" stop-color="#d2d2cc"/><stop offset="0.4" stop-color="#d2d2cc"/><stop offset="0.42" stop-color="#d2d2cc"/><stop offset="1" stop-color="#d2d2cc"/></linearGradient>
<rect x="0" y="0" width="61" height="61" fill="#fff"/><rect x="1.5" y="1.5" width="58" height="58" fill="url(#tb9)"/>
<use href="#obj"/>
<rect x="0" y="0" width="61" height="61" fill="none" stroke="#a6a6a6" stroke-width="1"/>
</g>
<g transform="translate(1735.5,467.5)">
<linearGradient id="tb10" x1="0" x2="0" y1="0" y2="1"><stop offset="0" stop-color="#9aa8d6"/><stop offset="0.36" stop-color="#e3e6f0"/><stop offset="0.38" stop-color="#a3b592"/><stop offset="1" stop-color="#a3b592"/></linearGradient>
<rect x="0" y="0" width="61" height="61" fill="#fff"/><rect x="1.5" y="1.5" width="58" height="58" fill="url(#tb10)"/>
<use href="#obj"/>
<rect x="0" y="0" width="61" height="61" fill="none" stroke="#a6a6a6" stroke-width="1"/>
</g>
<g transform="translate(1799.5,467.5)">
<linearGradient id="tb11" x1="0" x2="0" y1="0" y2="1"><stop offset="0" stop-color="#cfd3c6"/><stop offset="0.4" stop-color="#e2e4dc"/><stop offset="0.42" stop-color="#c9cdbf"/><stop offset="1" stop-color="#c9cdbf"/></linearGradient>
<rect x="0" y="0" width="61" height="61" fill="#fff"/><rect x="1.5" y="1.5" width="58" height="58" fill="url(#tb11)"/>
<use href="#obj"/>
<rect x="0" y="0" width="61" height="61" fill="none" stroke="#a6a6a6" stroke-width="1"/>
</g>
<g transform="translate(1607.5,531.5)">
<rect x="0" y="0" width="61" height="61" fill="#fff"/>
<use href="#obj"/>
<rect x="0" y="0" width="61" height="61" fill="none" stroke="#a6a6a6" stroke-width="1"/>
</g>
<g transform="translate(1606,183) scale(1.17)"><use href="#obj"/><use href="#clk"/></g>
</svg>
<!-- TOOLBAR ICONS (part A) -->
<svg width="1920" height="1080" style="z-index:3">
<defs>
  <linearGradient id="pinkT" x1="0" x2="1" y1="0" y2="1"><stop offset="0" stop-color="#fbb6c6"/><stop offset="1" stop-color="#f58aa6"/></linearGradient>
  <radialGradient id="lens" cx="0.4" cy="0.35" r="0.7"><stop offset="0" stop-color="#b5d3f3"/><stop offset="1" stop-color="#7eaee0"/></radialGradient>
  <linearGradient id="ruby" x1="0" x2="1" y1="0" y2="1"><stop offset="0" stop-color="#e8353c"/><stop offset="0.5" stop-color="#c0171e"/><stop offset="1" stop-color="#6e080d"/></linearGradient>
</defs>
<!-- grips -->
<g fill="#b9b2aa">
  <path d="M4,58h2v2h-2z M4,62h2v2h-2z M4,66h2v2h-2z M4,70h2v2h-2z M4,74h2v2h-2z M4,78h2v2h-2z M4,82h2v2h-2z M4,86h2v2h-2z M4,90h2v2h-2z M4,94h2v2h-2z"/>
  <path d="M1084,58h2v2h-2z M1084,62h2v2h-2z M1084,66h2v2h-2z M1084,70h2v2h-2z M1084,74h2v2h-2z M1084,78h2v2h-2z M1084,82h2v2h-2z M1084,86h2v2h-2z M1084,90h2v2h-2z M1084,94h2v2h-2z" fill="#c4c4c4"/>
  <path d="M1349,58h2v2h-2z M1349,62h2v2h-2z M1349,66h2v2h-2z M1349,70h2v2h-2z M1349,74h2v2h-2z M1349,78h2v2h-2z M1349,82h2v2h-2z M1349,86h2v2h-2z M1349,90h2v2h-2z M1349,94h2v2h-2z" fill="#c4c4c4"/>
</g>
<!-- separators -->
<g stroke="#808080" stroke-width="1.2">
  <path d="M54.5,58 V95.5 M296.4,58 V95.5 M514.6,58 V95.5 M648.4,58 V95.5 M824.7,58 V95.5 M958.5,58 V95.5 M1008.6,58 V95.5 M1441.4,58 V95.5"/>
</g>
<path d="M1079.6,56 V97 M1343.6,56 V97 M1658.8,56 V97" stroke="#c9c9c9" stroke-width="1.2"/>
<path d="M1080.8,56 V97 M1344.8,56 V97" stroke="#fff" stroke-width="1"/>
<!-- select -->
<rect x="9.5" y="55.8" width="43" height="41" fill="#e3f1fc"/>
<rect x="10.5" y="56.8" width="41" height="39" fill="#c0dff9"/>
<path d="M26.6,67 L27,86.1 L31.4,82.4 L34.2,88.5 L36.6,87.4 L33.8,81.6 L39.2,80.5 Z" fill="#000" stroke="#fff" stroke-width="1.6" stroke-linejoin="round" paint-order="stroke"/>
<!-- eraser -->
<g stroke="#111" stroke-width="1.1" stroke-linejoin="round">
  <polygon points="70,75.9 82.8,81.2 80.2,91 66.9,83.9" fill="#f77c9b"/>
  <polygon points="82.8,81.2 94.3,65.3 92.1,72.8 80.2,91" fill="#e45c7d"/>
  <polygon points="70,75.9 83.3,62.6 94.3,65.3 82.8,81.2" fill="url(#pinkT)"/>
</g>
<path d="M84,68 L87.5,69 M83,70 L86.5,71.2 M82,72.2 L85.5,73.4 M81,74.4 L84.3,75.6" stroke="#7d2438" stroke-width="1"/>
<!-- pencil -->
<g stroke-linejoin="round">
  <path d="M118.6,83.2 L136.3,63.4 L140,66.7 L122.2,86.5 Z" fill="#d61f28" stroke="#5d0d10" stroke-width="0.9"/>
  <path d="M120.4,84.8 L138.1,65" stroke="#f27b7f" stroke-width="1"/>
  <path d="M118.6,83.2 L122.2,86.5 L112.3,90.6 Z" fill="#e8d2a6" stroke="#333" stroke-width="0.8"/>
  <path d="M115.4,87 L116.8,88.8 L112.3,90.6 Z" fill="#111"/>
  <path d="M135,64.8 L138.7,68.1" stroke="#c9c9c9" stroke-width="1.2"/>
</g>
<polygon points="149.7,71.9 160.3,71.9 155,77.7" fill="#000"/>
<!-- arc -->
<path d="M182.3,88.3 A14.1,14.1 0 0 1 180.9,67.9 A14.1,14.1 0 0 1 201.8,68.4" fill="none" stroke="#111" stroke-width="1.4"/>
<path d="M201.8,68.4 L182.3,88.3 M180.9,67.9 L191.6,78.1" stroke="#e8202a" stroke-width="1.5"/>
<g fill="#ee1c25"><circle cx="180.9" cy="67.9" r="2.3"/><circle cx="201.8" cy="68.4" r="2.3"/><circle cx="182.3" cy="88.3" r="2.3"/></g>
<polygon points="213.3,71.9 224.3,71.9 218.9,77.7" fill="#000"/>
<!-- rectangle -->
<rect x="242.1" y="64.2" width="20.8" height="25.4" fill="#9b978a" stroke="#222" stroke-width="1"/>
<path d="M242.1,89.6 L262.9,64.4" stroke="#fff" stroke-width="3"/>
<path d="M242.1,89.6 L262.9,64.4" stroke="#e8202a" stroke-width="1.4"/>
<g fill="#ee1c25"><circle cx="242.1" cy="89.6" r="1.8"/><circle cx="262.9" cy="64.4" r="1.8"/></g>
<polygon points="277.5,71.9 288.1,71.9 282.8,77.7" fill="#000"/>
<!-- push/pull -->
<g stroke="#111" stroke-width="1" stroke-linejoin="round">
  <polygon points="308.4,78.1 320.4,87.4 320.4,90.5 308.4,80.6" fill="#6d6a60"/>
  <polygon points="320.4,87.4 338.1,77.7 338.1,80.2 320.4,90.5" fill="#55524a"/>
  <polygon points="308.4,78.1 322.6,72.8 338.1,77.7 320.4,87.4" fill="#9c998c"/>
  <path d="M322.6,64 L328,72.4 L324.9,72.4 L324.9,78.4 L320.3,78.4 L320.3,72.4 L317.2,72.4 Z" fill="#ee1c25" stroke="#2d0305" stroke-width="0.9"/>
</g>
<!-- follow me -->
<path d="M350.9,67.9 A16,16 0 0 1 374.4,91" fill="none" stroke="#ef2b3a" stroke-width="1.4"/>
<path d="M353.5,78.5 A9,9 0 0 1 363,70.5 M371,77.5 A12,12 0 0 1 365.5,87" fill="none" stroke="#2b3a44" stroke-width="1.3"/>
<path d="M377,65.3 L374.8,76.2 L372,73.6 L366.4,80.2 L361.9,76 L367.6,69.7 L364.8,67.1 Z" fill="#ee1c25" stroke="#2d0305" stroke-width="0.9" stroke-linejoin="round"/>
<!-- move -->
<g fill="#ee1c25" stroke="#2d0305" stroke-width="0.9" stroke-linejoin="round">
  <path d="M406.7,63.1 L411.6,69.6 L408.5,69.6 L408.5,74 L404.9,74 L404.9,69.6 L401.8,69.6 Z"/>
  <path d="M406.7,91 L411.6,84.4 L408.5,84.4 L408.5,80 L404.9,80 L404.9,84.4 L401.8,84.4 Z"/>
  <path d="M393,77 L399.6,72.1 L399.6,75.2 L404,75.2 L404,78.8 L399.6,78.8 L399.6,81.9 Z"/>
  <path d="M420.9,77 L414.3,72.1 L414.3,75.2 L409.9,75.2 L409.9,78.8 L414.3,78.8 L414.3,81.9 Z"/>
</g>
<path d="M399.8,72 L401.9,69.8 M411.5,69.8 L414,72.2 M399.8,82 L401.9,84.2 M411.5,84.2 L414,81.8" stroke="#9b1217" stroke-width="1.6"/>
<!-- rotate -->
<g fill="#ee1c25" stroke="#2d0305" stroke-width="0.9" stroke-linejoin="round">
  <path d="M438.8,72.6 A11,9.6 0 0 1 457.2,69.2 L459.6,65.4 L462.9,76.4 L451.9,75.4 L454.6,71.8 A7.2,6 0 0 0 442.6,74.4 Z"/>
  <path d="M460.8,81 A11,9.6 0 0 1 442,85.6 L439.4,89.4 L435.6,78.2 L446.8,79.4 L444.2,82.8 A7.2,6 0 0 0 456.8,79.6 Z"/>
</g>
<!-- scale -->
<rect x="477.5" y="62.5" width="29" height="28.9" fill="#fdf3f3" stroke="#ee3a44" stroke-width="1"/>
<rect x="477.5" y="69.3" width="22.2" height="22.1" fill="#9b978a" stroke="#222" stroke-width="1"/>
<path d="M506.8,61.9 L504.6,73 L501.7,70.2 L494.7,77.7 L490.1,73.3 L497.2,65.9 L494.3,63.1 Z" fill="#ee1c25" stroke="#3d0508" stroke-width="1" stroke-linejoin="round"/>
<!-- tape measure -->
<g stroke="#111" stroke-width="1" stroke-linejoin="round">
  <path d="M530,85.4 L541.6,79.4 L543.4,82.6 L532,89.2 Z" fill="#f3ee2e"/>
  <path d="M530,85.4 L532,89.2 L531,90.6 L528.6,86.4 Z" fill="#111"/>
  <path d="M540.6,66.6 C543.6,62.6 549.6,62.2 553,64.6 L553.6,73.6 C551.6,78.6 546.6,82 542.6,82.6 C538.6,79.6 538.2,70.6 540.6,66.6 Z" fill="#2b2b2b"/>
  <path d="M543.8,68.4 C546.2,64.8 550.6,64.4 553,65.8 L553.4,73.2 C551.4,77.6 547.4,80.4 544.2,80.8 C541.4,78 541.6,71.6 543.8,68.4 Z" fill="#a9adb6"/>
  <ellipse cx="548.2" cy="72.6" rx="3.4" ry="5" transform="rotate(28 548.2 72.6)" fill="#f3ee2e"/>
</g>
<!-- text tool -->
<rect x="577.2" y="63.1" width="20.8" height="18.1" fill="#fff" stroke="#111" stroke-width="1"/>
<path d="M577.2,72.4 H574.3 V84" fill="none" stroke="#111" stroke-width="1"/>
<polygon points="571.2,83.6 577.4,83.6 574.3,90.4" fill="#000"/>
<text x="580.6" y="76.6" font-family="Liberation Serif, serif" font-size="11.5" fill="#111" textLength="14" lengthAdjust="spacingAndGlyphs">A1</text>
<!-- paint bucket -->
<g stroke="#1a1a14" stroke-width="1" stroke-linejoin="round">
  <path d="M629.6,66.5 C632.6,63.8 636.8,65.6 635.8,69.6 C635.2,72.4 633.6,74.4 631.9,75.6" fill="none" stroke-width="1.3"/>
  <path d="M626.5,63.8 L636.6,79 C637.2,84 632,88.6 627.2,88.7 L616.7,81.7 C612,76 620,62 626.5,63.8 Z" fill="#6f756a"/>
  <path d="M628.4,71.8 L634,80.2 C633.8,84.6 630.8,87.6 627.6,88.5 L623,85.4 C626,82.4 628,77.4 628.4,71.8 Z" fill="#c6c6ac" stroke="none"/>
  <path d="M616.7,81.7 L627.2,88.7 C629.6,86.8 631,83.8 631.2,80.8 L624.6,78.2 Z" fill="#e7e5b8"/>
  <ellipse cx="618.8" cy="69" rx="9.4" ry="3.7" transform="rotate(-36 618.8 69)" fill="#9fc0be" stroke-width="1.5"/>
  <circle cx="628.4" cy="77.4" r="1.3" fill="#ddd"/>
  <path d="M623.3,72 C618,71.6 611.6,74.6 608.6,79 C607.2,83.6 609.6,89 612.1,90.6 C614.6,90.6 615,87.6 614.6,85 C614.4,82.6 615.6,81.6 616.5,81.2 C618.6,78 621,75 623.3,72 Z" fill="#f7c000"/>
</g>
</svg>

<!-- TOOLBAR ICONS (part B) -->
<svg width="1920" height="1080" style="z-index:3">
<!-- orbit -->
<g fill="none" stroke-linecap="butt">
  <path d="M677.4,69.4 A11.6,8 0 0 1 679,85.6" stroke="#0f4a26" stroke-width="5.8"/>
  <path d="M677.4,69.4 A11.6,8 0 0 1 679,85.6" stroke="#3db36a" stroke-width="4.4"/>
  <path d="M678.4,68.6 A11.6,8 0 0 1 686.4,74.6" stroke="#8fdcae" stroke-width="1.4"/>
  <path d="M672.6,69.6 A11.6,8 0 0 0 671.4,85.4" stroke="#4d080b" stroke-width="5.8"/>
  <path d="M672.6,69.6 A11.6,8 0 0 0 671.4,85.4" stroke="#d8212b" stroke-width="4.4"/>
  <path d="M664.6,80.6 A11.6,8 0 0 0 670.6,84.8" stroke="#f0777c" stroke-width="1.3"/>
</g>
<polygon points="679.6,81 679.6,90.4 673.4,85.8" fill="#3db36a" stroke="#0f4a26" stroke-width="0.7"/>
<polygon points="670.8,80.6 670.8,90.4 677.2,85.6" fill="#d8212b" stroke="#4d080b" stroke-width="0.7"/>
<polygon points="677.6,65 677.6,74 671.6,69.4" fill="#3db36a" stroke="#0f4a26" stroke-width="0.7"/>
<path d="M674.9,61.6 V92" stroke="#111" stroke-width="1.8"/>
<path d="M673.2,75 L676.8,77.4 L673.2,79.6 Z" fill="#fff"/>
<!-- pan hand -->
<path d="M704.2,84.6 C707.6,80.6 709.6,74.6 712.6,69.6 C713.8,67.2 716.2,67.8 715.8,70 C717.4,66.6 719.2,63.8 721,63 C722.6,62.6 723.2,64 722.6,65.6 C723.8,63.6 725.4,62.6 726.4,63.2 C727.4,63.8 727.2,65.4 726.4,66.8 C727.6,65.8 728.8,65.8 729.4,66.8 C729.8,68 728.8,69.6 727.6,71 C725.6,73.6 722.6,76.6 722.4,78.6 C724,79.8 726.6,79 728.4,79.6 C729.6,80.2 729.2,82 727.6,82.6 C723.6,83.6 718.6,84.6 716.6,86.6 C714.6,88.6 713,90.4 711.6,90.6 Z" fill="#f2e2ae" stroke="#7b7768" stroke-width="1" stroke-linejoin="round"/>
<path d="M715.8,70 L713.8,75 M722.6,65.6 L718.6,72.6 M726.4,66.8 L722.2,73.2" stroke="#7b7768" stroke-width="0.9" fill="none"/>
<!-- zoom -->
<path d="M758,77.6 L747.6,88.6" stroke="#1c1c1c" stroke-width="4.4" stroke-linecap="round"/>
<circle cx="763.5" cy="71.7" r="7.2" fill="url(#lens)" stroke="#14263a" stroke-width="2.1"/>
<!-- zoom extents -->
<path d="M798,81 L790,88.6" stroke="#1c1c1c" stroke-width="4" stroke-linecap="round"/>
<circle cx="802" cy="76.6" r="5.4" fill="url(#lens)" stroke="#14263a" stroke-width="1.9"/>
<g fill="#ee1c25" stroke="#7a0a0e" stroke-width="0.7" stroke-linejoin="round">
  <path d="M788.5,63.4 L795.6,64.6 L793.8,66.4 L797.4,70 L795,72.4 L791.4,68.8 L789.6,70.6 Z"/>
  <path d="M815.6,63.4 L808.4,64.6 L810.2,66.4 L806.6,70 L809,72.4 L812.6,68.8 L814.4,70.6 Z"/>
  <path d="M815.6,90.2 L808.4,89 L810.2,87.2 L806.6,83.6 L809,81.2 L812.6,84.8 L814.4,83 Z"/>
</g>
<!-- 3D warehouse -->
<g stroke-linejoin="round">
  <polygon points="836.8,72.6 843,70 846.4,80.6 840.6,79" fill="#7e7e7a" stroke="#222" stroke-width="0.8"/>
  <polygon points="856.4,66 864.8,74.6 859.6,79.6 853,72" fill="#6b6b66" stroke="#222" stroke-width="0.8"/>
  <polygon points="841.6,68.6 855.4,64 861.6,78.6 847.6,84.4" fill="#d8242e" stroke="#7a0a0e" stroke-width="0.8"/>
  <path d="M846,70.8 L854,68.2 L855.2,71 L850,72.8 L851,75.2 L856.2,73.4 M848.4,76.6 L853.6,74.8 L855,78 M851,80.4 L854,79.4" stroke="#fff" stroke-width="1.5" fill="none"/>
  <polygon points="840.6,79 847.6,84.4 861.6,78.6 862.6,82 849,89.2 842,83.6" fill="#3c3c3a" stroke="#111" stroke-width="0.8"/>
</g>
<!-- extension warehouse -->
<g stroke-linejoin="round">
  <polygon points="878.6,73.6 884.6,71.6 889.6,83.6 883,81" fill="#d9d9d9" stroke="#333" stroke-width="0.8"/>
  <polygon points="897,65.4 907.6,74.6 903,78.6 894,70" fill="#cfcfcf" stroke="#333" stroke-width="0.8"/>
  <polygon points="884,66.6 897,64.4 898.6,66.6 885.6,69" fill="#e8e8e8" stroke="#333" stroke-width="0.7"/>
  <path d="M882.6,72.4 L886.4,68 L897.6,66.4 L903,70.2 L902,75.6 L893.6,81.6 L885,78.4 Z" fill="url(#ruby)" stroke="#5d0a0d" stroke-width="0.8"/>
  <path d="M882.6,72.4 L890.4,71.6 L903,70.2 M886.4,68 L890.4,71.6 L893.6,81.6 M897.6,66.4 L895,71.2 L893.6,81.6" stroke="#f7a1a1" stroke-width="0.6" fill="none"/>
  <path d="M892.6,72 L897,70.4 L895.6,74.6 Z" fill="#fff"/>
  <polygon points="883,81 889.6,83.6 903,78.6 904.6,81.6 890,89.4 884.6,85.6" fill="#e3e3e3" stroke="#333" stroke-width="0.8"/>
</g>
<!-- send to layout -->
<g>
  <polygon points="921.6,67.6 941.6,63.8 947.2,84.6 927.6,88.6" fill="#f7c6cb" stroke="#e8404c" stroke-width="1.2"/>
  <path d="M922.6,70.8 L942.4,67 M926.6,72 L929.8,85.6 M927.6,75.6 L936.6,73.8 L938.2,80 M939.6,69.6 L942.8,81.6" stroke="#e8404c" stroke-width="1.6" fill="none"/>
  <circle cx="930.6" cy="79.8" r="2.8" fill="#fff" stroke="#e8404c" stroke-width="1"/>
  <path d="M932.6,81.8 L941.6,81.8 L941.6,79.2 L950,84.6 L941.6,90.2 L941.6,87.4 L932.6,87.4 Z" fill="#1d8ee6" stroke="#0b3a66" stroke-width="0.9" stroke-linejoin="round"/>
</g>
<!-- ruby gear -->
<g stroke-linejoin="round">
  <path d="M971.4,71.6 L976.6,65.6 L993,64.6 L999,70.2 L985.6,86.6 Z" fill="url(#ruby)" stroke="#5d0a0d" stroke-width="0.8"/>
  <path d="M971.4,71.6 L981,70.6 L999,70.2 M976.6,65.6 L981,70.6 L985.6,86.6 M993,64.6 L989.6,70.4 L985.6,86.6" stroke="#f59a9a" stroke-width="0.6" fill="none"/>
  <path d="M985,69.6 L990,67.6 L988.4,72.6 Z" fill="#fff"/>
  <circle cx="993.4" cy="85.4" r="3.4" fill="#f0f0f0" stroke="#a51c22" stroke-width="2.6"/>
  <path d="M993.4,79.8 V91 M987.8,85.4 H999 M989.4,81.4 L997.4,89.4 M997.4,81.4 L989.4,89.4" stroke="#a51c22" stroke-width="1.6"/>
  <circle cx="993.4" cy="85.4" r="1.7" fill="#f0f0f0"/>
</g>
<!-- user -->
<circle cx="1037.6" cy="76.8" r="14.8" fill="#f8f8f8" stroke="#444" stroke-width="1.15"/>
<circle cx="1036.4" cy="72.4" r="4.7" fill="none" stroke="#3a3a3a" stroke-width="1.4"/>
<path d="M1028.6,88.8 C1028.6,82.6 1031.6,80.2 1036.4,80.2 C1040,80.2 1042.4,81.4 1043.6,83.6" fill="none" stroke="#3a3a3a" stroke-width="1.4"/>
<circle cx="1045.6" cy="88.2" r="7.2" fill="#5d9f3c"/>
<path d="M1041.8,88.4 L1044.6,91.2 L1049.6,85.2" fill="none" stroke="#fff" stroke-width="1.7"/>
<polygon points="1061.6,71.3 1072.2,71.3 1066.9,77.6" fill="#000"/>
<!-- views: iso -->
<g stroke="#111" stroke-linejoin="round">
  <polygon points="1097.6,75.2 1104.6,71.6 1111.6,86 1111.6,89.4 1100.2,83.2" fill="#fdfdfd" stroke-width="1.2"/>
  <polygon points="1111.6,86 1123.6,74.2 1123.6,80.8 1111.6,89.4" fill="#ededed" stroke-width="1.2"/>
  <polygon points="1104.2,66.4 1116.6,63.8 1126,73.2 1112.6,79.4" fill="#9c998c" stroke-width="1"/>
  <path d="M1097,75.6 L1104.2,66.4 L1112.6,79.4" fill="none" stroke-width="2"/>
  <path d="M1112.6,79.4 L1126,73.2" fill="none" stroke-width="1.6"/>
  <rect x="1115.6" y="63.4" width="4.8" height="7" fill="#fff" stroke-width="1"/>
  <rect x="1102.6" y="77" width="3" height="6.8" fill="#333" stroke-width="0.6"/>
</g>
<!-- top -->
<g stroke="#222" stroke-width="1" stroke-linejoin="round">
  <polygon points="1141,66.4 1153,63.4 1153,89.6 1141,87.2" fill="#a29f92"/>
  <polygon points="1153,63.4 1165.4,65.8 1165.4,86.8 1153,89.6" fill="#8e8b7f"/>
  <rect x="1158.4" y="66.6" width="3" height="7.4" fill="#fff"/>
</g>
<!-- front -->
<g stroke="#111" stroke-linejoin="miter">
  <rect x="1185.6" y="77" width="18.8" height="12" fill="#fff" stroke-width="1.8"/>
  <path d="M1182.6,78.4 L1195.3,67.2 L1208,78.4" fill="#fff" stroke-width="2.6"/>
  <rect x="1192.2" y="78.4" width="6.2" height="10.6" fill="#2a2a2a" stroke="none"/>
  <rect x="1198.6" y="67.4" width="2.2" height="3" fill="#999" stroke-width="0.5"/>
</g>
<!-- right -->
<g stroke="#111" stroke-linejoin="round">
  <rect x="1226.3" y="77" width="21.7" height="12.3" fill="#fff" stroke-width="1.8"/>
  <polygon points="1226.6,66.8 1247.8,66.8 1250.9,76.8 1223.2,76.8" fill="#9c998c" stroke-width="1.2"/>
  <rect x="1238.9" y="63.2" width="7" height="7.8" fill="#fff" stroke-width="1.2"/>
</g>
<!-- back -->
<g stroke="#111" stroke-linejoin="miter">
  <rect x="1271.6" y="66" width="2.4" height="5" fill="#bbb" stroke-width="0.6"/>
  <rect x="1269" y="77" width="19" height="12" fill="#fff" stroke-width="1.8"/>
  <path d="M1265.8,78.4 L1278.6,67.2 L1291.6,78.4" fill="#fff" stroke-width="2.6"/>
</g>
<!-- left -->
<g stroke="#111" stroke-linejoin="round">
  <rect x="1313.6" y="65" width="5" height="2.4" fill="#bbb" stroke-width="0.6"/>
  <rect x="1310.2" y="77" width="21.8" height="12.3" fill="#fff" stroke-width="1.8"/>
  <polygon points="1310.8,67 1331.6,67 1334.8,77 1307.1,77" fill="#9c998c" stroke-width="1.2"/>
</g>
<!-- sandbox: from contours -->
<g stroke-linejoin="round">
  <path d="M1361.2,70 C1366,66 1370,63.4 1374.6,64 C1378.6,64.6 1380.6,66 1383,66 C1384.6,71.6 1388.6,76.6 1391.2,79.6 C1385,82.6 1372.6,88 1364.6,88.6 Z" fill="#b9b3a3" stroke="#222" stroke-width="1"/>
  <path d="M1366,70 C1370,66.6 1376,66 1378.6,69.6 C1380.6,73.6 1384.6,76.6 1385.6,80 M1363.6,75.6 C1368,72.6 1372.6,72 1374.6,75.6 C1376,79 1380,81 1380.6,84 M1364.2,81.6 C1367.6,79.6 1370.6,80.2 1371.6,83 C1372.2,85 1371,86.6 1369.6,87.4 M1370,64.8 C1372,66.6 1376,66.2 1378,64.6 M1374.2,76.6 C1376,74 1380,74.6 1380.6,77.6" fill="none" stroke="#e8303a" stroke-width="0.9"/>
</g>
<!-- sandbox: from scratch -->
<g stroke-linejoin="round">
  <polygon points="1403.6,69.2 1424,64.4 1433,80.6 1408.6,88.4" fill="#9c998c" stroke="#222" stroke-width="1"/>
  <path d="M1410.4,67.6 L1416.6,85.8 M1417.2,66 L1424.8,83.2 M1405.2,75.6 L1427,69.8 M1407,82 L1430,75.2" stroke="#3a3a36" stroke-width="0.9" fill="none"/>
  <path d="M1403.6,69.2 L1424,64.4 M1403.6,69.2 L1408.6,88.4" stroke="#ee1c25" stroke-width="1.6"/>
  <g fill="#ee1c25"><circle cx="1403.6" cy="69.2" r="2.4"/><circle cx="1424" cy="64.4" r="2.4"/><circle cx="1408.6" cy="88.4" r="2.4"/></g>
</g>
<!-- smoove -->
<g stroke-linejoin="round">
  <path d="M1452,79.4 C1458,74 1462,68 1466,66 C1472,68 1478,71.6 1484.2,73.6 L1472.6,90.6 Z" fill="#b5b1a2" stroke="#222" stroke-width="1"/>
  <path d="M1456,77 L1476.6,86 M1459.6,73.6 L1479.6,81.8 M1462.6,70 L1482,77.2 M1457.6,82.4 C1462,77 1466,72 1469.6,67.6 M1462.6,85 C1467,79 1471,74 1475.6,70 M1467.6,87.6 C1471.6,82 1475.6,77 1480,72.2" stroke="#3a3a36" stroke-width="0.7" fill="none"/>
  <path d="M1468,62.6 L1472,68.6 L1469.8,68.6 L1469.8,77.6 L1472,77.6 L1468,83.6 L1464,77.6 L1466.2,77.6 L1466.2,68.6 L1464,68.6 Z" fill="#ee1c25" stroke="#5d0a0d" stroke-width="0.8"/>
</g>
<!-- stamp -->
<g stroke-linejoin="round" stroke="#222" stroke-width="0.9">
  <polygon points="1495,73.6 1507.6,64.6 1525.4,80.6 1501.6,88.6" fill="#8d8a7e"/>
  <polygon points="1500,76.6 1508.6,70.6 1520,80.6 1504.6,85.6" fill="#c4c1b3"/>
  <polygon points="1502.6,77.6 1509.6,73 1516.6,79.6 1506.6,83" fill="#6d6b62"/>
  <polygon points="1503.6,71.6 1509.6,66 1515.6,71 1515.6,77 1508,79.6 1503.6,76.6" fill="#f2f2f2"/>
  <rect x="1509.6" y="72.6" width="3" height="3.6" fill="#333" stroke="none"/>
</g>
<!-- drape -->
<g stroke-linejoin="round" stroke="#222" stroke-width="1">
  <path d="M1537,74.6 C1542,73 1546,72.6 1548,71 L1557.6,71.6 C1558.6,76.6 1562,82 1565,85.6 C1558,86.6 1548,90 1541.6,91.6 C1541,85.6 1539.6,80 1537,74.6 Z" fill="#d8d8d2"/>
  <path d="M1543.6,80.6 C1544.6,75.6 1550.6,73.6 1553,77.6 C1555,82 1554.6,86.6 1549.6,87.6 C1545.6,88 1543,85 1543.6,80.6 Z" fill="#e8e8e4"/>
  <path d="M1541.8,65.6 C1542.6,69.6 1543.6,71.6 1545.6,73 C1548.6,74.4 1553.6,74 1555.6,72 C1557,70 1557.6,67.6 1558,65" fill="#f4f4f2"/>
  <ellipse cx="1549.9" cy="65.2" rx="8.1" ry="2.8" fill="#fbfbfb"/>
  <path d="M1545,68.6 C1548,67.2 1552,67.2 1555.6,68.4" fill="none" stroke-width="0.8"/>
</g>
<!-- add detail -->
<g stroke-linejoin="round">
  <polygon points="1578,69.4 1599.6,64.4 1609.8,80.6 1584.6,89.4" fill="#4a4a46" stroke="#111" stroke-width="1"/>
  <polygon points="1578,69.4 1591.6,75 1584.6,89.4" fill="#8d8a7e" stroke="#111" stroke-width="0.6"/>
  <polygon points="1578,69.4 1599.6,64.4 1591.6,75" fill="#a29f92" stroke="#111" stroke-width="0.6"/>
  <path d="M1591.6,75 L1609.8,80.6 M1591.6,75 L1599.6,87 M1588.6,66.8 L1591.6,75" stroke="#c9c6b8" stroke-width="0.6" fill="none"/>
  <circle cx="1592.4" cy="75" r="3" fill="#fff"/><circle cx="1592.4" cy="75" r="1.8" fill="#ee1c25"/>
</g>
<!-- flip edge -->
<g stroke-linejoin="round">
  <polygon points="1621.6,83.6 1633.6,64.8 1648.6,88.4" fill="#a29f92" stroke="#111" stroke-width="0.9"/>
  <polygon points="1633.6,64.8 1650.6,65.4 1648.6,88.4" fill="#4a4a46" stroke="#111" stroke-width="0.9"/>
  <polygon points="1633.6,64.8 1650.6,65.4 1641,75.4" fill="#6d6b62" stroke="#111" stroke-width="0.6"/>
  <path d="M1621.6,83.6 L1650.6,65.4" stroke="#ee1c25" stroke-width="1.6"/>
  <circle cx="1621.6" cy="83.6" r="2.2" fill="#ee1c25"/><circle cx="1650.6" cy="65.4" r="2.2" fill="#ee1c25"/>
</g>
</svg>

<!-- TASKBAR + STATUS ICONS -->
<svg width="1920" height="1080" style="z-index:4">
<defs>
  <linearGradient id="phg" x1="0" x2="1" y1="0" y2="1"><stop offset="0" stop-color="#2f8be6"/><stop offset="1" stop-color="#5b47cf"/></linearGradient>
  <linearGradient id="phm" x1="0" x2="1" y1="1" y2="0"><stop offset="0" stop-color="#5ad0fb"/><stop offset="1" stop-color="#2b8fe0"/></linearGradient>
  <linearGradient id="yx" x1="0" x2="1" y1="0" y2="0"><stop offset="0" stop-color="#ff8a1f"/><stop offset="1" stop-color="#f0308f"/></linearGradient>
</defs>
<!-- status bar icons -->
<circle cx="15.4" cy="1014.3" r="8" fill="#f4f4f4" stroke="#a3a3a3" stroke-width="1.3"/>
<path d="M15.4,1019.6 C13.6,1016 12.2,1013.8 12.2,1011.8 A3.2,3.2 0 0 1 18.6,1011.8 C18.6,1013.8 17.2,1016 15.4,1019.6 Z" fill="#a3a3a3"/>
<circle cx="50.4" cy="1014.3" r="8" fill="#f7f7f7" stroke="#0a0a0a" stroke-width="1.8"/>
<circle cx="50.4" cy="1009.9" r="1.5" fill="#0a0a0a"/>
<path d="M48.2,1013 H52.6 V1016 H51.6 V1019.6 H49.2 V1016 H48.2 Z" fill="#0a0a0a"/>
<!-- start logo -->
<g fill="#fff">
  <polygon points="19.4,1047.4 28,1046.2 28,1054.4 19.4,1054.4"/>
  <polygon points="29.2,1046 40,1044.6 40,1054.4 29.2,1054.4"/>
  <polygon points="19.4,1055.6 28,1055.6 28,1063.8 19.4,1062.6"/>
  <polygon points="29.2,1055.6 40,1055.6 40,1065.4 29.2,1064"/>
</g>
<!-- search icon -->
<circle cx="88.4" cy="1051.6" r="5.6" fill="none" stroke="#1b1b1b" stroke-width="1.6"/>
<path d="M84.4,1055.8 L77.6,1063.4" stroke="#1b1b1b" stroke-width="1.8"/>
<!-- underlines -->
<g fill="#83bdea">
  <rect x="499" y="1077" width="51" height="3"/><rect x="561" y="1077" width="51" height="3"/><rect x="623" y="1077" width="51" height="3"/>
  <rect x="680" y="1077" width="57" height="3"/>
  <rect x="746.7" y="1077" width="51" height="3"/><rect x="808.8" y="1077" width="51" height="3"/><rect x="870.8" y="1077" width="51" height="3"/>
  <rect x="933" y="1077" width="51" height="3"/><rect x="995" y="1077" width="51" height="3"/>
</g>
<g fill="#5e8db3"><rect x="663.5" y="1077" width="10.5" height="3"/><rect x="787" y="1077" width="10.7" height="3"/><rect x="849.5" y="1077" width="10.3" height="3"/><rect x="911.5" y="1077" width="10.3" height="3"/></g>
<!-- explorer -->
<path d="M510.2,1043.6 Q510.2,1041.6 512.2,1041.6 L520.6,1041.6 L523,1044 L535.6,1044 Q537.4,1044 537.4,1046 L537.4,1063.8 Q537.4,1065.6 535.6,1065.6 L512,1065.6 Q510.2,1065.6 510.2,1063.8 Z" fill="#f6c445"/>
<path d="M510.2,1046.4 L537.4,1046.4 L537.4,1048.4 L510.2,1048.4 Z" fill="#e3a92c"/>
<path d="M515.6,1065.6 L515.6,1056.6 Q515.6,1055 517.2,1055 L530.4,1055 Q532,1055 532,1056.6 L532,1065.6 L528.4,1065.6 L528.4,1059.4 L519.2,1059.4 L519.2,1065.6 Z" fill="#3a9be0"/>
<rect x="519.2" y="1059.4" width="9.2" height="6.2" fill="#f9d564"/>
<!-- yandex browser -->
<circle cx="585.8" cy="1054.8" r="14.6" fill="#fff"/>
<path d="M578.2,1046.6 L585.8,1056.4 L585.8,1065.4" fill="none" stroke="#ff5a1f" stroke-width="3.4" stroke-linejoin="round"/>
<path d="M585.8,1056.4 L593.6,1047" fill="none" stroke="url(#yx)" stroke-width="3.4"/>
<path d="M585.8,1056.4 L593.6,1047" fill="none" stroke="#ee3d8a" stroke-width="3.4" stroke-dasharray="6 20" stroke-dashoffset="-6"/>
<!-- autocad -->
<rect x="632.9" y="1039.9" width="30.2" height="29.8" fill="#f6e4e0"/>
<path d="M637.6,1064.8 L646,1043.8 L650.8,1043.8 L658.6,1064.8 L653.4,1064.8 L651.6,1059.6 L644.2,1060.6 L642.6,1064.8 Z M645.8,1056.2 L650.4,1055.6 L648.2,1049 Z" fill="#c01f26" fill-rule="evenodd"/>
<path d="M637.6,1064.8 L646,1043.8 L647.6,1043.8 L640.2,1064.8 Z" fill="#8e1218"/>
<!-- sketchup -->
<g>
  <polygon points="697.8,1046 713,1040.4 723.2,1046.4 722.4,1061.6 704,1067.8" fill="#e0262c"/>
  <polygon points="697.8,1046 713,1040.4 723.2,1046.4 707.4,1052" fill="#ef3b3f"/>
  <polygon points="707.4,1052 723.2,1046.4 722.4,1061.6 704,1067.8" fill="#d01f26"/>
  <path d="M702.4,1046.6 L712.8,1042.8 L718.4,1046 M706.6,1049 L713.6,1046.4 L711,1049.6 L715.6,1052.4 M703.2,1053.6 L708.6,1057 L706.6,1059.6 L703.8,1058" fill="none" stroke="#fff" stroke-width="1.9"/>
</g>
<!-- photos -->
<rect x="758.7" y="1041.7" width="26.4" height="26.6" rx="4" fill="url(#phg)"/>
<path d="M758.7,1062 L771.6,1049.4 Q773,1048.2 774.4,1049.4 L785.1,1059.8 L785.1,1064.4 Q785.1,1068.3 781.2,1068.3 L762.6,1068.3 Q758.7,1068.3 758.7,1064.4 Z" fill="url(#phm)"/>
<path d="M762.6,1068.3 L775.8,1056 L785.1,1064.4 Q785.1,1068.3 781.2,1068.3 Z" fill="#2a9df0" opacity="0.85"/>
<circle cx="778.3" cy="1046.6" r="2.1" fill="#fff"/>
<!-- revit -->
<path d="M822.4,1042.4 L826,1040.4 L846.6,1040.4 L846.6,1070 L820.2,1070 L820.2,1046 Z" fill="#1c68dc"/>
<path d="M822.4,1042.4 L826,1040.4 L826,1060.6 L820.2,1062.4 L820.2,1046 Z" fill="#1450b8"/>
<path d="M820.2,1062.4 L826,1060.6 L846.6,1060.6 L846.6,1070 L820.2,1070 Z" fill="#0f3f9e"/>
<text x="829.6" y="1056.4" font-family="Liberation Sans, sans-serif" font-weight="bold" font-size="15" fill="#fff">R</text>
<text x="827.4" y="1068.2" font-family="Liberation Sans, sans-serif" font-weight="bold" font-size="6.6" fill="#fff" textLength="14" lengthAdjust="spacingAndGlyphs">RVT</text>
<!-- acrobat -->
<rect x="882" y="1040.3" width="27.7" height="26.8" rx="3.6" fill="#c3150f"/>
<path d="M888,1061.6 C890.6,1058.6 894.6,1052.6 895.6,1047.2 C895.8,1045 894,1045 894.2,1047.2 C894.8,1052 899.6,1057.6 904,1058 C906,1058 905.6,1056.2 903.6,1056.2 C899,1056.2 892,1058.6 888.8,1061.8 C887.4,1063.2 886.8,1062.6 888,1061.6 Z" fill="none" stroke="#fff" stroke-width="1.4" stroke-linejoin="round"/>
<!-- photoshop -->
<rect x="944.2" y="1040.8" width="27.5" height="25.2" rx="4" fill="#0b1f3b"/>
<text x="948.6" y="1059.6" font-family="Liberation Sans, sans-serif" font-weight="bold" font-size="15.5" fill="#3aa7fb" textLength="19" lengthAdjust="spacingAndGlyphs">Ps</text>
<!-- paint -->
<path d="M1006,1058.6 C1005.6,1050.6 1013,1044.6 1021.6,1045 C1030.6,1045.4 1034.6,1052 1032.6,1058.6 C1031,1064 1025,1068 1018.6,1066.6 C1016,1066 1017.6,1062.6 1015,1061.6 C1011.6,1060.6 1006.4,1063.6 1006,1058.6 Z" fill="#d9e6f2"/>
<path d="M1006,1058.6 C1005.6,1050.6 1013,1044.6 1021.6,1045 C1015,1047 1011,1052 1011.6,1058 C1011.8,1060.2 1006.4,1063.6 1006,1058.6 Z" fill="#b9cde0"/>
<circle cx="1011.6" cy="1055.6" r="2" fill="#d9432f"/><circle cx="1015.2" cy="1050.6" r="2" fill="#58a84a"/><circle cx="1020.6" cy="1048.6" r="2" fill="#e8a13a"/><circle cx="1017.6" cy="1058" r="1.7" fill="#55667a"/>
<path d="M1029.6,1044.6 L1022.6,1066.4" stroke="#c98542" stroke-width="2.2" stroke-linecap="round"/>
<path d="M1030.6,1041.4 L1028.8,1047.2 L1031.2,1047.8 L1032.6,1042.4 Z" fill="#e6c79a"/>
<!-- tray -->
<path d="M1611.6,1057.6 L1618.4,1050.8 L1625.2,1057.6" fill="none" stroke="#fff" stroke-width="1.2"/>
<rect x="1643.6" y="1045.2" width="6.8" height="13.2" rx="3.4" fill="#fff"/>
<path d="M1641.6,1054.6 C1641.6,1062.4 1652.4,1062.4 1652.4,1054.6 M1647,1060.6 V1064.4 M1643.8,1064.6 H1650.2" fill="none" stroke="#fff" stroke-width="1.1"/>
<path d="M1668.2,1048 L1687.6,1045.4 L1687.6,1062.6 L1668.2,1061.4 Z" fill="none" stroke="#fff" stroke-width="1.2" stroke-linejoin="round"/>
<path d="M1673.6,1053 H1680.6 M1680.6,1053 L1678.6,1051 M1680.6,1053 L1678.6,1055 M1681.4,1057.6 H1674.4 M1674.4,1057.6 L1676.4,1055.6 M1674.4,1057.6 L1676.4,1059.6" fill="none" stroke="#fff" stroke-width="1.1"/>
<circle cx="1684" cy="1061" r="4.2" fill="#e81123"/>
<rect x="1702.6" y="1049.4" width="14.4" height="9.8" fill="none" stroke="#fff" stroke-width="1.2"/>
<rect x="1704.2" y="1051" width="11.2" height="6.6" fill="#fff"/>
<rect x="1717.2" y="1052.4" width="1.4" height="4" fill="#fff"/>
<path d="M1698.6,1050.6 V1047.6 M1701,1050.6 V1047.6 M1697.6,1050.6 H1702 V1053 C1702,1055.6 1697.6,1055.6 1697.6,1053 Z M1699.8,1055 V1057.4 H1702.4" fill="none" stroke="#fff" stroke-width="1"/>
<path d="M1868.6,1045.6 H1888.6 V1060.6 H1882.4 L1878.6,1064.4 L1874.8,1060.6 H1868.6 Z" fill="none" stroke="#fff" stroke-width="1.2" stroke-linejoin="miter"/>
</svg>

<span class="t" style="left:26.93px;top:6.70px;font-size:15px;color:#000;transform:scaleX(0.9534);">relyef_1 (2) (SU 2019) (1).skp - SketchUp Pro 2019</span>
<span class="t" style="left:6.67px;top:33.50px;font-size:15px;color:#000;transform:scaleX(1.0003);">Файл</span>
<span class="t" style="left:56.38px;top:33.50px;font-size:15px;color:#000;transform:scaleX(1.0307);">Изменить</span>
<span class="t" style="left:140.18px;top:33.50px;font-size:15px;color:#000;transform:scaleX(0.9598);">Вид</span>
<span class="t" style="left:179.58px;top:33.50px;font-size:15px;color:#000;transform:scaleX(1.0253);">Камера</span>
<span class="t" style="left:247.08px;top:33.50px;font-size:15px;color:#000;transform:scaleX(1.0042);">Нарисовать</span>
<span class="t" style="left:343.68px;top:33.50px;font-size:15px;color:#000;transform:scaleX(1.0120);">Инструменты</span>
<span class="t" style="left:451.18px;top:33.50px;font-size:15px;color:#000;transform:scaleX(1.0628);">Окно</span>
<span class="t" style="left:501.18px;top:33.50px;font-size:15px;color:#000;transform:scaleX(1.0069);">Справка</span>
<span class="t" style="left:82.67px;top:1007.30px;font-size:15px;color:#000;transform:scaleX(1.0276);">Выберите объекты. Воспользуйтесь клавишей Shift, чтобы увеличить выбранную область. Перетащите мышь, чтобы выбрать несколько объектов.</span>
<span class="t" style="left:1574.17px;top:1007.30px;font-size:15px;color:#000;transform:scaleX(1.0624);">Измерения</span>
<span class="t" style="left:109.98px;top:1046.24px;font-size:18.5px;color:#3a3a3a;transform:scaleX(1.0150);">Чтобы начать поиск, введите здесь запрос</span>
<span class="t" style="left:1792.38px;top:1036.10px;font-size:15px;color:#fff;transform:scaleX(0.9628);">23:58</span>
<span class="t" style="left:1775.17px;top:1058.50px;font-size:15px;color:#fff;transform:scaleX(0.9503);">01.03.2026</span>
<span class="t" style="left:1731.47px;top:1047.70px;font-size:15px;color:#fff;transform:scaleX(0.9003);">РУС</span>
<span class="t" style="left:1604.31px;top:107.72px;font-size:12.5px;color:#1a1a1a;transform:scaleX(1.1524);">Лоток по умолчанию</span>
<span class="t" style="left:1627.20px;top:131.83px;font-size:14.5px;color:#111;transform:scaleX(1.0903);">Компоненты</span>
<span class="t" style="left:1627.20px;top:155.93px;font-size:14.5px;color:#111;transform:scaleX(0.9955);">Стили</span>
<span class="t" style="left:1688.14px;top:182.44px;font-size:12px;color:#111;transform:scaleX(1.0540);">Затенение1</span>
<span class="t" style="left:1688.64px;top:208.24px;font-size:12px;color:#111;transform:scaleX(1.0789);">Цвета по умолчанию,</span>
<span class="t" style="left:1688.64px;top:224.24px;font-size:12px;color:#111;transform:scaleX(1.0708);">затенение стиля грани.</span>
<span class="t" style="left:1688.64px;top:240.14px;font-size:12px;color:#111;transform:scaleX(1.0736);">Материалы отображаются</span>
<span class="t" style="left:1688.64px;top:256.14px;font-size:12px;color:#111;transform:scaleX(1.0637);clip-path:inset(0 0 5.4px 0);">со средними значениями</span>
<span class="t" style="left:1607.34px;top:280.64px;font-size:12px;color:#111;transform:scaleX(1.0492);">Выбрать</span>
<span class="t" style="left:1669.74px;top:282.34px;font-size:12px;color:#111;transform:scaleX(1.0511);">Правка</span>
<span class="t" style="left:1723.74px;top:282.34px;font-size:12px;color:#111;transform:scaleX(1.0441);">Соединить</span>
<span class="t" style="left:1696.74px;top:315.04px;font-size:12px;color:#111;transform:scaleX(1.0580);">Стили по умолчанию</span>
<span class="t" style="left:1738.40px;top:403.13px;font-size:14.5px;color:#111;transform:scaleX(1.0007);z-index:30;">Каркас</span>
<span class="t" style="left:1604.84px;top:722.54px;font-size:12px;color:#111;transform:scaleX(1.0409);">Выбрать</span>
<span class="t" style="left:1693.84px;top:753.44px;font-size:12px;color:#111;transform:scaleX(1.0878);">Стили&lt;1&gt;</span>
<span class="t" style="left:1627.20px;top:920.93px;font-size:14.5px;color:#111;transform:scaleX(1.0093);">Слои</span>
<span class="t" style="left:1627.90px;top:944.93px;font-size:14.5px;color:#111;transform:scaleX(1.0613);">Тени</span>
<span class="t" style="left:1657.74px;top:976.84px;font-size:12px;color:#111;transform:scaleX(1.0635);">UTC+03:00</span>
</body>
</html>
